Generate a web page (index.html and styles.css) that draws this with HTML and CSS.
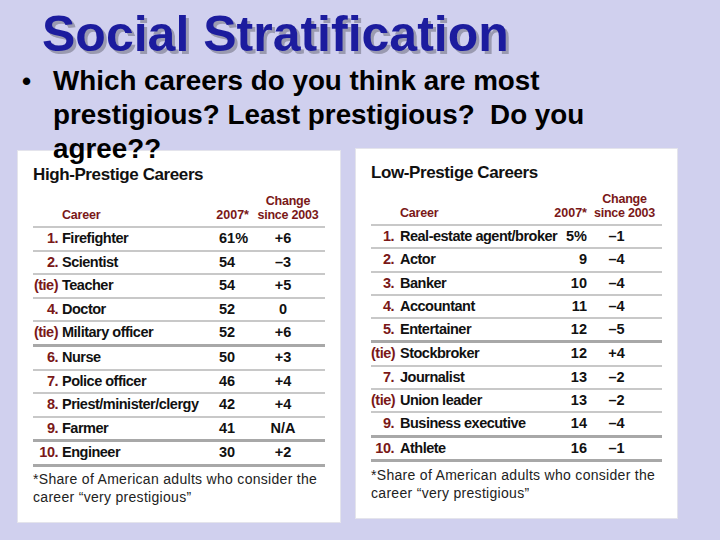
FILE: index.html
```html
<!DOCTYPE html>
<html>
<head>
<meta charset="utf-8">
<link rel="stylesheet" href="styles.css">
</head>
<body>
<div class="slide">
  <h1 class="title">Social Stratification</h1>
  <div class="bullet">
    <span class="dot">•</span>
    <p class="btext">Which careers do you think are most prestigious? Least prestigious?&nbsp; Do you agree??</p>
  </div>
  <div class="panels">
    <div class="panel left">
      <div class="ptitle">High-Prestige Careers</div>
      <div class="grid">
        <div class="hd rank"></div><div class="hd name">Career</div><div class="hd val">2007*</div><div class="hd chg">Change<br>since 2003</div>
        <div class="rule"></div>
        <div class="rank">1.</div><div class="name">Firefighter</div><div class="val">61%</div><div class="chg">+6</div>
        <div class="rule"></div>
        <div class="rank">2.</div><div class="name">Scientist</div><div class="val">54</div><div class="chg">–3</div>
        <div class="rule"></div>
        <div class="rank">(tie)</div><div class="name">Teacher</div><div class="val">54</div><div class="chg">+5</div>
        <div class="rule"></div>
        <div class="rank">4.</div><div class="name">Doctor</div><div class="val">52</div><div class="chg">0</div>
        <div class="rule"></div>
        <div class="rank">(tie)</div><div class="name">Military officer</div><div class="val">52</div><div class="chg">+6</div>
        <div class="rule thick"></div>
        <div class="rank">6.</div><div class="name">Nurse</div><div class="val">50</div><div class="chg">+3</div>
        <div class="rule"></div>
        <div class="rank">7.</div><div class="name">Police officer</div><div class="val">46</div><div class="chg">+4</div>
        <div class="rule"></div>
        <div class="rank">8.</div><div class="name">Priest/minister/clergy</div><div class="val">42</div><div class="chg">+4</div>
        <div class="rule"></div>
        <div class="rank">9.</div><div class="name">Farmer</div><div class="val">41</div><div class="chg">N/A</div>
        <div class="rule thick"></div>
        <div class="rank">10.</div><div class="name">Engineer</div><div class="val">30</div><div class="chg">+2</div>
        <div class="rule thick"></div>
      </div>
      <p class="note">*Share of American adults who consider the career “very prestigious”</p>
    </div>
    <div class="panel right">
      <div class="ptitle">Low-Prestige Careers</div>
      <div class="grid">
        <div class="hd rank"></div><div class="hd name">Career</div><div class="hd val">2007*</div><div class="hd chg">Change<br>since 2003</div>
        <div class="rule"></div>
        <div class="rank">1.</div><div class="name">Real-estate agent/broker</div><div class="val">5%</div><div class="chg">–1</div>
        <div class="rule"></div>
        <div class="rank">2.</div><div class="name">Actor</div><div class="val">9</div><div class="chg">–4</div>
        <div class="rule"></div>
        <div class="rank">3.</div><div class="name">Banker</div><div class="val">10</div><div class="chg">–4</div>
        <div class="rule"></div>
        <div class="rank">4.</div><div class="name">Accountant</div><div class="val">11</div><div class="chg">–4</div>
        <div class="rule"></div>
        <div class="rank">5.</div><div class="name">Entertainer</div><div class="val">12</div><div class="chg">–5</div>
        <div class="rule thick"></div>
        <div class="rank">(tie)</div><div class="name">Stockbroker</div><div class="val">12</div><div class="chg">+4</div>
        <div class="rule"></div>
        <div class="rank">7.</div><div class="name">Journalist</div><div class="val">13</div><div class="chg">–2</div>
        <div class="rule"></div>
        <div class="rank">(tie)</div><div class="name">Union leader</div><div class="val">13</div><div class="chg">–2</div>
        <div class="rule"></div>
        <div class="rank">9.</div><div class="name">Business executive</div><div class="val">14</div><div class="chg">–4</div>
        <div class="rule thick"></div>
        <div class="rank">10.</div><div class="name">Athlete</div><div class="val">16</div><div class="chg">–1</div>
        <div class="rule thick"></div>
      </div>
      <p class="note">*Share of American adults who consider the career “very prestigious”</p>
    </div>
  </div>
</div>
</body>
</html>
```
FILE: styles.css
```css
html, body {
  margin: 0;
  padding: 0;
}
body {
  width: 720px;
  height: 540px;
  overflow: hidden;
  background: #d0d0ee;
  font-family: "Liberation Sans", Arial, sans-serif;
}
.slide {
  display: flex;
  flex-direction: column;
}
.title {
  margin: 0;
  padding: 6px 0 0 42px;
  font-size: 50px;
  line-height: 56px;
  font-weight: bold;
  color: #1c1c9e;
  text-shadow: 3px 3px 0 #9a9ab0;
}
.bullet {
  display: flex;
  position: relative;
  z-index: 1;
  padding-left: 22px;
  margin-top: 2px;
}
.dot {
  width: 31px;
  font-size: 26px;
  line-height: 34px;
  font-weight: bold;
}
.btext {
  margin: 0;
  width: 545px;
  font-size: 27.8px;
  line-height: 34px;
  font-weight: bold;
  color: #000;
}
.panels {
  display: flex;
  gap: 14px;
  padding-left: 17px;
  margin-top: -16px;
  align-items: flex-start;
}
.panel {
  background: #fff;
  border: 1px solid #e4e4ec;
  box-sizing: border-box;
  padding: 17px 15px 0 15px;
}
.panel.left { width: 324px; height: 373px; }
.panel.right { width: 323px; height: 371px; margin-top: -2px; }
.ptitle {
  font-weight: bold;
  font-size: 17px;
  line-height: 14px;
  letter-spacing: -0.4px;
  color: #111;
}
.grid {
  display: grid;
  margin-top: 13px;
  font-weight: bold;
  font-size: 14.5px;
  line-height: 21.6px;
  letter-spacing: -0.5px;
  color: #111;
  white-space: nowrap;
}
.right .grid { line-height: 21.3px; }
.left .grid { grid-template-columns: 25px 161px 30px 1fr; }
.right .grid { grid-template-columns: 23px 170px 23px 1fr; }
.grid .rank { text-align: right; color: #7a1818; }
.left .grid .name { padding-left: 4px; }
.right .grid .name { padding-left: 6px; }
.left .grid .val { text-align: left; letter-spacing: 0; }
.right .grid .val { text-align: right; letter-spacing: 0; }
.grid .chg { text-align: center; letter-spacing: 0; }
.left .grid .chg { padding-right: 8px; }
.right .grid .chg { padding-right: 16px; }
.grid .hd {
  color: #7a1818;
  font-size: 12.5px;
  line-height: 13.5px;
  letter-spacing: -0.2px;
  align-self: end;
  padding-bottom: 4px;
}
.grid .hd.chg { padding-left: 2px; padding-right: 0; }
.right .grid .hd.chg { padding-left: 0; }
.left .grid .hd.val { margin-left: -12px; text-align: right; }
.right .grid .hd.val { margin-left: -25px; text-align: right; }
.rule {
  grid-column: 1 / -1;
  height: 2px;
  background: #c8c8c8;
}
.rule.thick {
  height: 3px;
  background: #a8a8a8;
}
.note {
  margin: 3px 0 0 0;
  font-size: 14px;
  line-height: 18px;
  letter-spacing: 0.3px;
  color: #222;
  width: 292px;
}
.right .note { margin-top: 4px; }
```
